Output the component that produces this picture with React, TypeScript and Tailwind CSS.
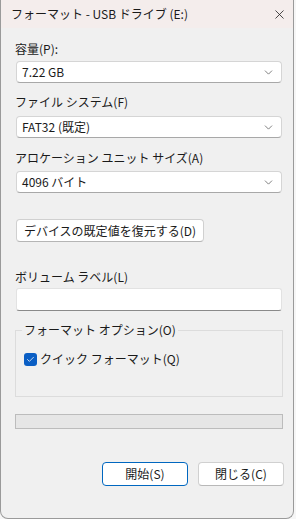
import { ChevronDown, X, Check } from "lucide-react";

const font = "font-['Noto_Sans_CJK_JP','Noto_Sans',sans-serif]";

function Combo({ value }: { value: string }) {
    return (
        <div className="h-[22px] mx-[15px] w-[266px] bg-white border border-[#d5d5d5] border-b-[#a8a8a8] rounded-[4px] flex items-center justify-between pl-[5px] pr-[6px]">
            <span className="text-[12px] leading-none text-[#1a1a1a]">{value}</span>
            <ChevronDown className="w-[13px] h-[13px] text-[#5a5a5a]" strokeWidth={1.4} />
        </div>
    );
}

function Label({ text, mt }: { text: string; mt: string }) {
    return <div className={`px-[14px] text-[12px] leading-[16px] text-[#1a1a1a] ${mt}`}>{text}</div>;
}

export default function App() {
    return (
        <div className={`w-[296px] h-[519px] bg-[#f6f6f6] flex ${font}`}>
            <div className="w-[294px] h-[519px] bg-[#f0f0f0] border-l border-r border-b border-[#9a9a9a] rounded-b-[8px] flex flex-col overflow-hidden">
                {/* title bar */}
                <div className="h-[28px] bg-[#f4edec] flex items-center justify-between pl-[10px] pr-[6px]">
                    <span className="text-[12px] text-[#1a1a1a]">フォーマット - USB ドライブ (E:)</span>
                    <X className="w-[15px] h-[15px] text-[#222]" strokeWidth={1.3} />
                </div>

                <Label text="容量(P):" mt="mt-[13px]" />
                <div className="mt-[4px]"><Combo value="7.22 GB" /></div>

                <Label text="ファイル システム(F)" mt="mt-[11px]" />
                <div className="mt-[6px]"><Combo value="FAT32 (既定)" /></div>

                <Label text="アロケーション ユニット サイズ(A)" mt="mt-[12px]" />
                <div className="mt-[5px]"><Combo value="4096 バイト" /></div>

                <div className="mt-[26px] mx-[15px] w-[188px] h-[23px] bg-white border border-[#d0d0d0] border-b-[#b5b5b5] rounded-[4px] flex items-center justify-center text-[12px] text-[#1a1a1a]">
                    デバイスの既定値を復元する(D)
                </div>

                <Label text="ボリューム ラベル(L)" mt="mt-[27px]" />
                <div className="mt-[3px] mx-[15px] w-[266px] h-[23px] bg-white border border-[#e2e2e2] border-b-[#8a8a8a] rounded-[3px]" />

                {/* options group */}
                <div className="relative mt-[19px] mx-[14px] w-[268px] h-[67px] border border-[#dcdcdc]">
                    <span className="absolute -top-[9px] left-[6px] px-[2px] bg-[#f0f0f0] text-[12px] leading-[16px] text-[#1a1a1a]">
                        フォーマット オプション(O)
                    </span>
                    <div className="flex items-center gap-[3px] mt-[20px] ml-[8px]">
                        <div className="w-[13px] h-[13px] rounded-[3px] bg-[#0a5ec4] flex items-center justify-center">
                            <Check className="w-[9px] h-[9px] text-white" strokeWidth={2} />
                        </div>
                        <span className="text-[12px] leading-[16px] text-[#1a1a1a]">クイック フォーマット(Q)</span>
                    </div>
                </div>

                <div className="mt-[17px] mx-[14px] w-[268px] h-[15px] bg-[#e6e6e6] border border-[#bcbcbc]" />

                <div className="mt-[33px] flex gap-[10px] pl-[101px]">
                    <div className="w-[86px] h-[24px] bg-white border border-[#0067c0] rounded-[4px] flex items-center justify-center text-[12px] text-[#1a1a1a]">
                        開始(S)
                    </div>
                    <div className="w-[86px] h-[24px] bg-white border border-[#d0d0d0] border-b-[#b8b8b8] rounded-[4px] flex items-center justify-center text-[12px] text-[#1a1a1a]">
                        閉じる(C)
                    </div>
                </div>
            </div>
        </div>
    );
}
